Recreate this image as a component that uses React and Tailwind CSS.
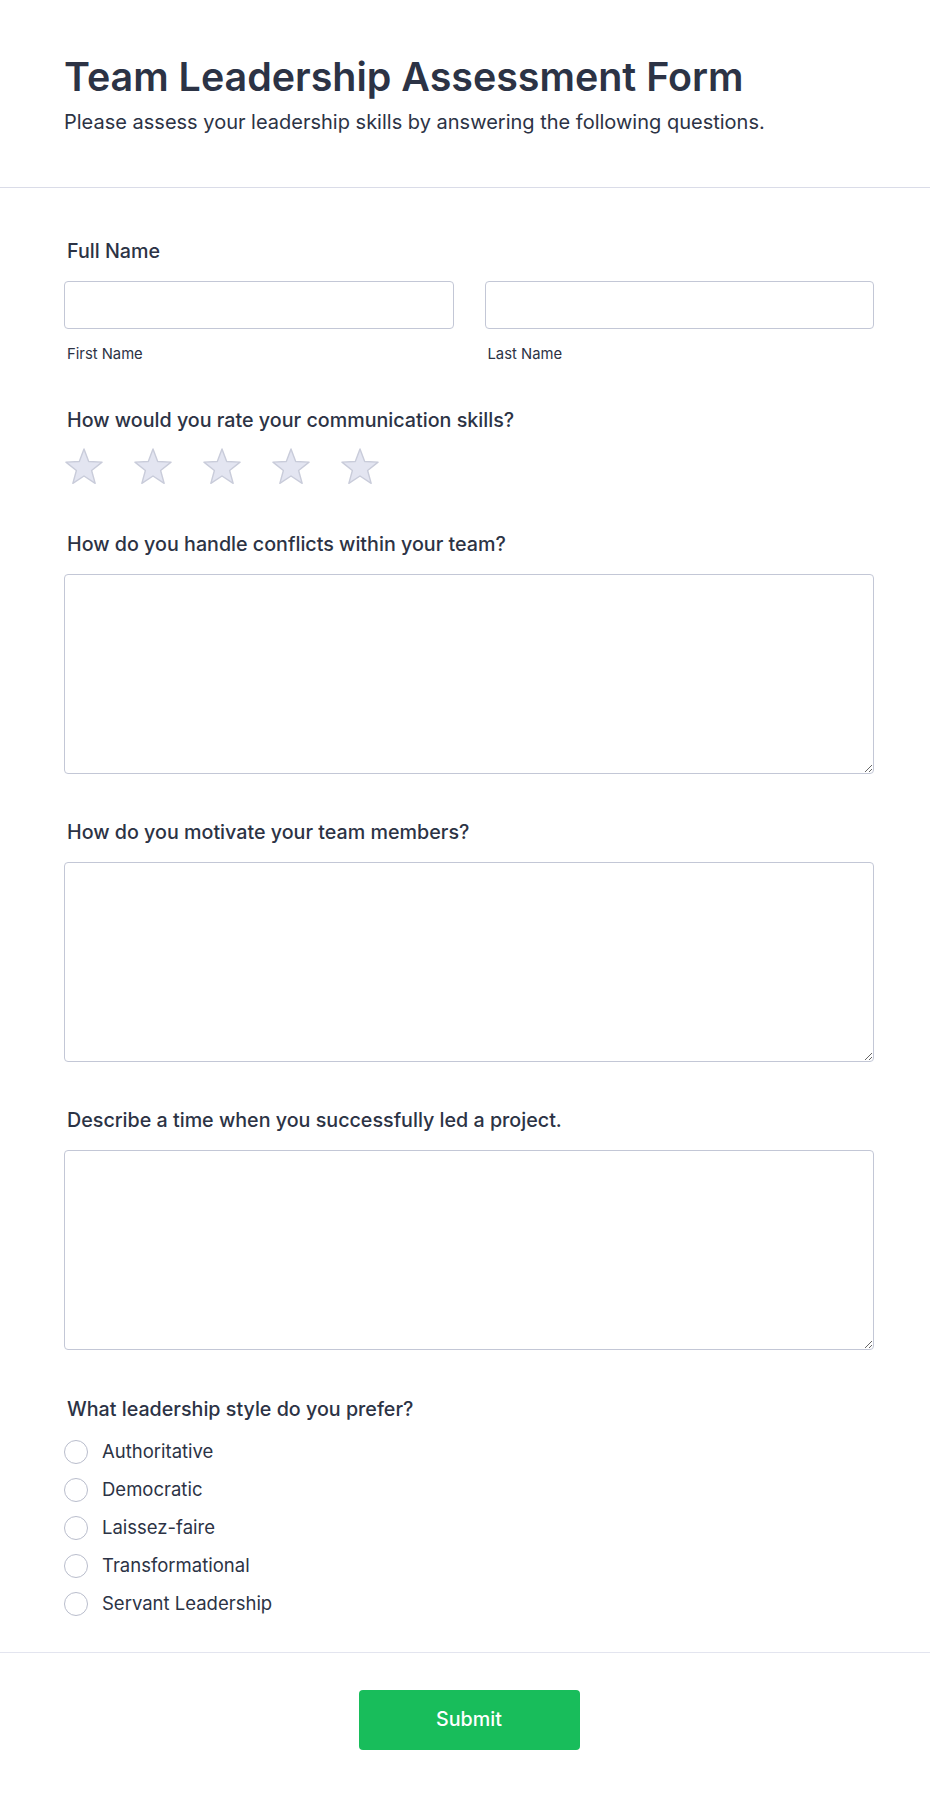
import { useState } from "react";

const questions = [
  "How do you handle conflicts within your team?",
  "How do you motivate your team members?",
  "Describe a time when you successfully led a project.",
];

const styles = [
  "Authoritative",
  "Democratic",
  "Laissez-faire",
  "Transformational",
  "Servant Leadership",
];

function Star() {
  return (
    <svg width="40" height="38" viewBox="0 0 40 38">
      <path
        d="M20 1 L24.7 13.53 L38.07 14.13 L27.61 22.47 L31.17 35.37 L20 28 L8.83 35.37 L12.39 22.47 L1.93 14.13 L15.3 13.53 Z"
        fill="#e3e5f1"
        stroke="#c9ccda"
        strokeWidth="1.4"
        strokeLinejoin="round"
      />
    </svg>
  );
}

export default function App() {
  const [style, setStyle] = useState("");

  return (
    <div
      className="bg-white text-[#2c3345] min-h-[1798px]"
      style={{ fontFamily: "Inter, 'Noto Sans', sans-serif" }}
    >
      {/* HEADER */}
      <div className="border-b border-[#dadce8] pl-[64px] pr-[56px] pt-[53px] pb-[51px]">
        <h1 className="text-[39.4px] leading-[48px] font-semibold">
          Team Leadership Assessment Form
        </h1>
        <p className="mt-[8px] text-[20px] leading-[27px]">
          Please assess your leadership skills by answering the following questions.
        </p>
      </div>

      {/* FORM */}
      <div className="pl-[64px] pr-[56px] pt-[50px]">
        <div>
          <label className="block pl-[3px] text-[19.7px] leading-[27px] font-medium">
            Full Name
          </label>
          <div className="mt-[16px] grid grid-cols-2 gap-[31px]">
            <div>
              <input className="w-full h-[48px] border border-[#c3c7d6] rounded-[4px] px-3 outline-none" />
              <div className="mt-[15px] pl-[3px] text-[14.8px] leading-[20px]">First Name</div>
            </div>
            <div>
              <input className="w-full h-[48px] border border-[#c3c7d6] rounded-[4px] px-3 outline-none" />
              <div className="mt-[15px] pl-[3px] text-[14.8px] leading-[20px]">Last Name</div>
            </div>
          </div>
        </div>

        <div className="mt-[43px]">
          <label className="block pl-[3px] text-[19.7px] leading-[27px] font-medium">
            How would you rate your communication skills?
          </label>
          <div className="mt-[14px] flex gap-[29px]">
            {[1, 2, 3, 4, 5].map((n) => (
              <Star key={n} />
            ))}
          </div>
        </div>

        {questions.map((q) => (
          <div key={q} className="mt-[45px]">
            <label className="block pl-[3px] text-[19.7px] leading-[27px] font-medium">
              {q}
            </label>
            <textarea className="mt-[16px] block w-full h-[200px] border border-[#c3c7d6] rounded-[4px] p-3 outline-none" />
          </div>
        ))}

        <div className="mt-[46px] pb-[29px]">
          <label className="block pl-[3px] text-[19.7px] leading-[27px] font-medium">
            What leadership style do you prefer?
          </label>
          <div className="mt-[10px]">
            {styles.map((s) => (
              <label key={s} className="flex items-center h-[38px] cursor-pointer">
                <span
                  onClick={() => setStyle(s)}
                  className="w-[24px] h-[24px] rounded-full border-[1.5px] border-[#b9bdcc] bg-white flex items-center justify-center"
                >
                  {style === s && <span className="w-[12px] h-[12px] rounded-full bg-[#2c3345]" />}
                </span>
                <span className="ml-[14px] text-[18.5px]">{s}</span>
              </label>
            ))}
          </div>
        </div>
      </div>

      {/* FOOTER */}
      <div className="border-t border-[#e3e5ef] pl-[64px] pr-[56px] pt-[37px] pb-[49px] flex justify-center">
        <button className="w-[221px] h-[60px] rounded-[4px] bg-[#18bd5b] text-white text-[19.7px] font-medium">
          Submit
        </button>
      </div>
    </div>
  );
}
